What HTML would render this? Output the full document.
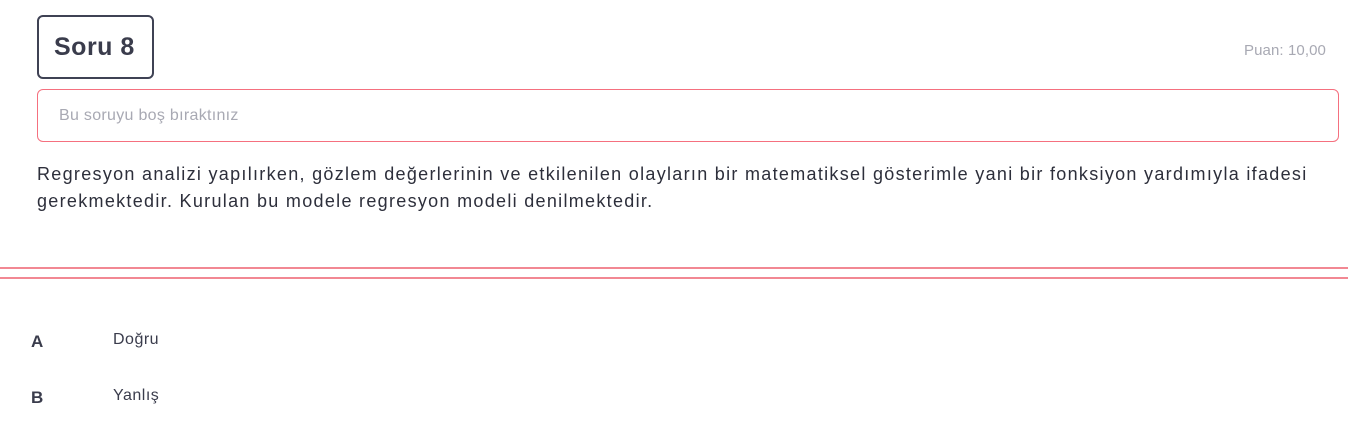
<!DOCTYPE html>
<html><head><meta charset="utf-8"><style>
body{margin:0;width:1348px;height:440px;background:#fff;font-family:"Liberation Sans",sans-serif;color:#2d2f3b;position:relative;overflow:hidden}
.box{position:absolute;left:37px;top:15px;border:2px solid #3f4254;border-radius:6px;width:113px;height:60px}
.box span{position:absolute;left:15px;top:16px;font-size:25px;font-weight:bold;color:#3a3c4c;letter-spacing:0.5px}
.puan{position:absolute;right:22px;top:42px;font-size:15px;color:#a8a9b3;letter-spacing:0.1px}
.alert{position:absolute;left:37px;top:89px;width:1300px;height:51px;border:1.5px solid #f5707f;border-radius:6px}
.alert span{position:absolute;left:21px;top:17px;font-size:16px;color:#a8a9b3;letter-spacing:0.3px}
.q{position:absolute;left:37px;top:161px;font-size:18px;line-height:27px;color:#2d2f3b;width:1290px;letter-spacing:1.3px}
.l{position:absolute;left:0;width:1348px;height:2px;background:#f28893}
.o{position:absolute;font-size:16px;color:#3a3c4c;letter-spacing:0.5px}
</style></head><body>
<div class="box"><span>Soru 8</span></div>
<div class="puan">Puan: 10,00</div>
<div class="alert"><span>Bu soruyu boş bıraktınız</span></div>
<div class="q">Regresyon analizi yapılırken, gözlem değerlerinin ve etkilenilen olayların bir matematiksel gösterimle yani bir fonksiyon yardımıyla ifadesi gerekmektedir. Kurulan bu modele regresyon modeli denilmektedir.</div>
<div class="l" style="top:267px"></div>
<div class="l" style="top:277px"></div>
<div class="o" style="left:31px;top:332px;font-weight:bold;font-size:17px">A</div>
<div class="o" style="left:113px;top:331px">Doğru</div>
<div class="o" style="left:31px;top:388px;font-weight:bold;font-size:17px">B</div>
<div class="o" style="left:113px;top:387px">Yanlış</div>
</body></html>
